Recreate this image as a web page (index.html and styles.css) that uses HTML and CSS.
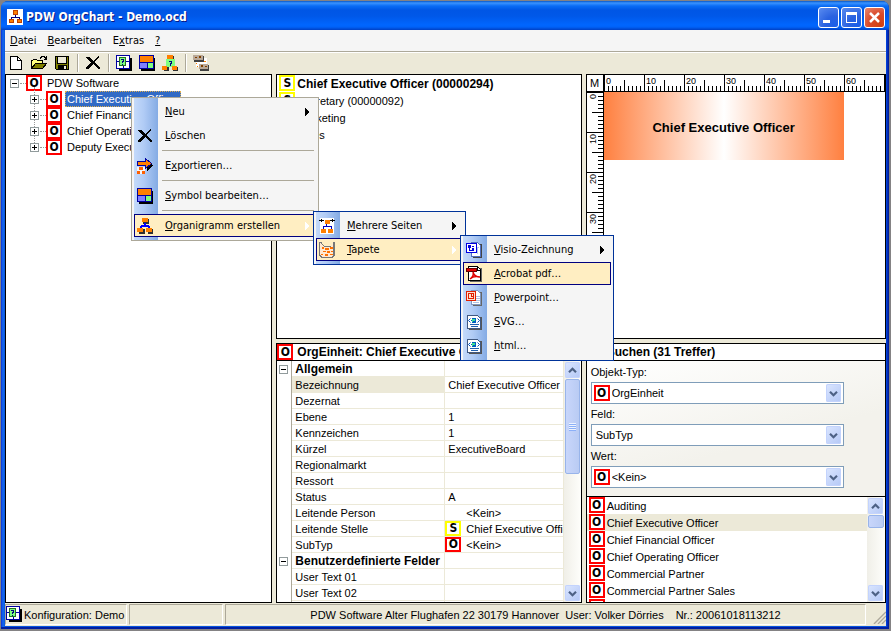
FILE: index.html
```html
<!DOCTYPE html>
<html lang="de">
<head>
<meta charset="utf-8">
<title>PDW OrgChart - Demo.ocd</title>
<link rel="stylesheet" href="styles.css">
</head>
<body>
<svg class="sprite" aria-hidden="true">
  <defs>
    <pattern id="ticks-x" width="40" height="17" patternUnits="userSpaceOnUse">
      <path d="M.5 0v17M20.500 5v12M4.500 11v6M8.500 11v6M12.500 11v6M16.500 11v6M24.500 11v6M28.500 11v6M32.500 11v6M36.500 11v6" stroke="#000"/>
    </pattern>
    <pattern id="ticks-y" width="17" height="40" patternUnits="userSpaceOnUse">
      <path d="M0 .5h17M5 20.500h12M11 4.500h6M11 8.500h6M11 12.500h6M11 16.500h6M11 24.500h6M11 28.500h6M11 32.500h6M11 36.500h6" stroke="#000"/>
    </pattern>
  </defs>
  <symbol id="app" viewBox="0 0 16 16"><path fill="#fff" d="M0 0h16v16H0z"/><path stroke="#000080" fill="none" d="M8.500 4v4M4.500 11V8.500h8V11"/><path fill="#ff8000" stroke="#c04000" d="M6.500 1.500h4v4h-4zM2.500 10.500h4v3h-4zM10.500 10.500h4v3h-4z"/></symbol>
  <symbol id="new" viewBox="0 0 16 16"><path fill="#fff" stroke="#000" d="M2.500 1.500h7l4 4v9h-11z"/><path fill="none" stroke="#000" d="M9.500 1.500v4h4"/></symbol>
  <symbol id="open" viewBox="0 0 16 16"><path fill="#ffff80" stroke="#000" d="M.5 14V5.500h1l1-1h3l1 1h5v3"/><path fill="#808000" stroke="#000" d="M.5 13.500l4-5h11l-4 5z"/><path fill="none" stroke="#000" d="M9 3.500l2-2h2l2 2M15.500 1v3h-3"/></symbol>
  <symbol id="save" viewBox="0 0 16 16"><path fill="#808000" stroke="#000" d="M1.500 1.500h13v13h-12l-1-1z"/><path fill="#ece9d8" d="M4 2h8v6H4z"/><path d="M4 10h9v4H4zM12 3h1v1h-1z"/><path fill="#ece9d8" d="M10 11h2v3h-2z"/><path stroke="#000" d="M3.500 2v6.500h9V2" fill="none"/></symbol>
  <symbol id="delete" viewBox="0 0 16 16"><path d="M1 2h3l4 4 5-5h1v1L10 7l5 6v1h-2L8 9l-4 5H1v-1l5-6-5-4z"/></symbol>
  <symbol id="config" viewBox="0 0 16 16"><path d="M3 3h13v13H3z"/><path fill="#fff" stroke="#0000a0" d="M.5 .5h13v13H.5zM.5 6.500h13M7.500 10v4"/><path fill="#80ff80" stroke="#207020" d="M3.500 2.500h6v8h-6z"/><path fill="#000080" d="M5 4h3v3H7v1H6V6h1V5H5zM6 9h1v1H6z"/></symbol>
  <symbol id="symbol" viewBox="0 0 16 16"><path d="M2 3h14v13H2z"/><path fill="#ff8000" stroke="#0000a0" d="M.5 .5h14v7H.5z"/><path fill="#8080ff" stroke="#0000a0" d="M.5 7.500h8v6h-8z"/><path fill="#80ff80" stroke="#0000a0" d="M8.500 7.500h6v6h-6z"/></symbol>
  <symbol id="query" viewBox="0 0 16 16"><path fill="#303030" d="M7 1h5v4H7zM2 12h5v4H2zM11 12h5v4h-5z"/><path fill="#80ff80" d="M4 4h9v8H4z"/><path fill="#000080" d="M7 6h3v3H9v1H8V8h1V7H7zM8 10h1v1H8z"/><path fill="#ff8000" d="M5 0h6v4H5zM0 11h5v4H0zM10 11h5v4h-5z"/></symbol>
  <symbol id="connect" viewBox="0 0 16 16"><path fill="#fff" d="M3 3h11v9H3z"/><path fill="#404040" d="M1 1h10v6H1zM7 10h9v6H7z"/><path fill="#b8a898" d="M0 0h10v5H0zM6 9h9v5H6z"/><path fill="#804000" d="M2 2h2v1H2zM6 1h2v2H6zM8 10h2v2H8zM12 11h2v1h-2z"/><path fill="#ff8000" d="M3 8h1v1H3zM11 6h2v1h-2zM4 11h1v1H4z"/></symbol>
  <symbol id="export" viewBox="0 0 16 16"><path fill="#000" d="M11 4l5 3-6 6v-4H4V9h6z"/><path fill="#ff8000" stroke="#0000a0" d="M.5 3.500h8v-3l6 5-6 5v-3h-8z"/><path fill="#f5f5f5" d="M0 9h8v7H0z"/><path fill="#ff6000" d="M2 9h4v3H2zM0 13h3v3H0zM5 13h3v3H5z"/></symbol>
  <symbol id="org" viewBox="0 0 16 16"><path fill="#303030" d="M6 1h6v5H6zM2 11h6v5H2zM11 11h5v5h-5z"/><path fill="none" stroke="#0000ff" stroke-width="2" d="M8 5v3M3 11l2-3h6l2 3"/><path fill="#ff8000" d="M5 0h6v4H5zM0 10h6v4H0zM9 10h6v4H9z"/></symbol>
  <symbol id="pages" viewBox="0 0 16 16"><path fill="#fff" d="M1 0h14v16H1z"/><path stroke="#000" fill="none" d="M0 2.500h5M11 2.500h5M2.500 1v3M13.500 1v3"/><path fill="none" stroke="#0000c0" d="M7.500 6v3M4.500 12V8.500h8V12"/><path fill="#ff8000" d="M6 2h5v4H6zM2 11h5v4H2zM9 11h5v4H9z"/></symbol>
  <symbol id="wall" viewBox="0 0 16 16"><path fill="#777" d="M0 0h3v2l2 2h7l2-2V0h2v14l-3 2H3l-3-2z"/><path fill="#ffe8d0" d="M1 1l4 4h7l2-4v12l-2 2H4l-3-2V3z"/><path fill="#ff7000" d="M3 5h2v2H3zM6 6h4v2H6zM11 5h3v2h-3zM4 9h3v1H4zM8 9h3v2H8zM12 9h2v1h-2zM2 12h2v1H2zM6 12h3v2H6zM11 12h3v1h-3z"/></symbol>
  <symbol id="visio" viewBox="0 0 16 16"><path fill="#444" d="M7 2h9v14H7z"/><path fill="#fff" stroke="#5070c0" d="M5.500 .5h6l3 3v11h-9z"/><path stroke="#b0c8f0" d="M10 5.500h3M11.500 6v6"/><path fill="#fff" stroke="#0000e0" d="M.5 1.500h10v9H.5z"/><path fill="#0000e0" d="M2 3h3v3H2zM6 6h2v3H6zM3 6h1v2h2v1H3zM6 4h2v1H6z"/></symbol>
  <symbol id="pdf" viewBox="0 0 16 16"><path fill="#666" d="M4 2h12v14H4z"/><path fill="#fff" stroke="#000" d="M2.500 .5h9l3 3v11h-12z"/><path fill="none" stroke="#000" d="M11.500 1v3h3"/><path fill="#e00000" stroke="#600" d="M.5 2.500h10v3H.5z"/><path shape-rendering="auto" fill="none" stroke="#e00000" stroke-width="1.500" d="M7 6c1 3 0 5-3 7M7 6c1 4 3 5 7 5M4 13c3-3 6-3 10-2"/></symbol>
  <symbol id="ppt" viewBox="0 0 16 16"><path fill="#666" d="M7 2h9v14H7z"/><path fill="#fff" stroke="#8098c0" d="M5.500 .5h6l3 3v11h-9z"/><path stroke="#b0c0e0" d="M10 6.500h4M10 8.500h4M10 10.500h4M7 12.500h6"/><path fill="#ffe0d0" stroke="#e02000" d="M.5 1.500h9v9H.5z"/><path fill="none" stroke="#e02000" d="M2.500 3.500h5v5h-5zM5.500 4v2.500H8"/></symbol>
  <symbol id="web" viewBox="0 0 16 16"><path fill="#555" d="M3 3h13v13H3z"/><path fill="#fff" stroke="#405880" d="M1.500 1.500h10l3 3v10h-13z"/><path shape-rendering="auto" fill="none" stroke="#0050c0" d="M4.500 4.500L2.500 6.500l2 2M11.500 4.500l2 2-2 2"/><circle cx="8" cy="6.500" r="2.500" fill="#0060c0"/><path fill="#40e090" d="M6 5h3v2H7v1H6z"/><path stroke="#2060b0" d="M4 10.500h9M5 12.500h7"/></symbol>
  <symbol id="arrow" viewBox="0 0 4 8"><path d="M0 0l4 4-4 4z"/></symbol>
  <symbol id="down" viewBox="0 0 10 8"><path shape-rendering="auto" fill="none" stroke="#4d6185" stroke-width="2.500" d="M1 2l4 4 4-4"/></symbol>
  <symbol id="up" viewBox="0 0 10 8"><path shape-rendering="auto" fill="none" stroke="#4d6185" stroke-width="2.500" d="M1 6l4-4 4 4"/></symbol>
</svg>

<div class="window">
  <header class="titlebar">
    <svg class="icon"><use href="#app"/></svg>
    <h1>PDW OrgChart - Demo.ocd</h1>
    <div class="caption-buttons">
      <button class="caption" aria-label="Minimieren"><svg viewBox="0 0 19 19"><path fill="#fff" d="M4 12h7v3H4z"/></svg></button>
      <button class="caption" aria-label="Maximieren"><svg viewBox="0 0 19 19"><path fill="#fff" d="M4 4h11v11H4zM5 7v7h9V7z" fill-rule="evenodd"/></svg></button>
      <button class="caption close" aria-label="Schließen"><svg viewBox="0 0 19 19"><path shape-rendering="auto" stroke="#fff" stroke-width="2.500" d="M5 5l9 9M14 5l-9 9"/></svg></button>
    </div>
  </header>

  <nav class="menubar">
    <button><u>D</u>atei</button>
    <button><u>B</u>earbeiten</button>
    <button>E<u>x</u>tras</button>
    <button><u>?</u></button>
  </nav>

  <div class="toolbar">
    <button aria-label="Neu"><svg class="icon"><use href="#new"/></svg></button>
    <button aria-label="Öffnen"><svg class="icon"><use href="#open"/></svg></button>
    <button aria-label="Speichern"><svg class="icon"><use href="#save"/></svg></button>
    <i></i>
    <button aria-label="Löschen"><svg class="icon"><use href="#delete"/></svg></button>
    <i></i>
    <button aria-label="Konfiguration"><svg class="icon"><use href="#config"/></svg></button>
    <button aria-label="Symbol"><svg class="icon"><use href="#symbol"/></svg></button>
    <button aria-label="Abfrage"><svg class="icon"><use href="#query"/></svg></button>
    <i></i>
    <button aria-label="Verbinden"><svg class="icon"><use href="#connect"/></svg></button>
  </div>

  <main class="workspace">
    <section class="panel tree">
      <div class="node root"><button class="expander" aria-label="Zuklappen"></button><b class="badge">O</b><span>PDW Software</span></div>
      <ul>
        <li class="node selected"><button class="expander plus" aria-label="Aufklappen"></button><b class="badge">O</b><span>Chief Executive Officer</span></li>
        <li class="node"><button class="expander plus" aria-label="Aufklappen"></button><b class="badge">O</b><span>Chief Financial Officer</span></li>
        <li class="node"><button class="expander plus" aria-label="Aufklappen"></button><b class="badge">O</b><span>Chief Operating Officer</span></li>
        <li class="node"><button class="expander plus" aria-label="Aufklappen"></button><b class="badge">O</b><span>Deputy Executive</span></li>
      </ul>
    </section>

    <section class="panel">
      <ul class="list">
        <li class="strong"><b class="badge stelle">S</b>Chief Executive Officer (00000294)</li>
        <li><b class="badge stelle">S</b>Secretary (00000092)</li>
        <li><b class="badge">O</b>Marketing</li>
        <li><b class="badge">O</b>Sales</li>
      </ul>
    </section>

    <section class="panel preview">
      <div class="corner">M</div>
      <svg class="ruler-x">
        <rect width="100%" height="17" fill="url(#ticks-x)"/>
        <g><text x="2" y="9">0</text><text x="42" y="9">10</text><text x="82" y="9">20</text><text x="122" y="9">30</text><text x="162" y="9">40</text><text x="202" y="9">50</text><text x="242" y="9">60</text></g>
      </svg>
      <svg class="ruler-y">
        <rect width="17" height="100%" fill="url(#ticks-y)"/>
        <g><text transform="translate(9 7) rotate(-90)">0</text><text transform="translate(9 52) rotate(-90)">10</text><text transform="translate(9 92) rotate(-90)">20</text><text transform="translate(9 132) rotate(-90)">30</text><text transform="translate(9 172) rotate(-90)">40</text></g>
      </svg>
      <div class="canvas"><div class="org-box">Chief Executive Officer</div></div>
    </section>

    <section class="panel properties">
      <h2><b class="badge">O</b>OrgEinheit: Chief Executive Officer</h2>
      <div class="scroll-area">
        <div class="grid-wrap">
        <table>
          <colgroup><col class="gutter"><col class="name"><col></colgroup>
          <tr class="group"><td><button class="expander" aria-label="Zuklappen"></button></td><th>Allgemein</th><td></td></tr>
          <tr class="current-row"><td></td><th>Bezeichnung</th><td>Chief Executive Officer</td></tr>
          <tr><td></td><th>Dezernat</th><td></td></tr>
          <tr><td></td><th>Ebene</th><td>1</td></tr>
          <tr><td></td><th>Kennzeichen</th><td>1</td></tr>
          <tr><td></td><th>Kürzel</th><td>ExecutiveBoard</td></tr>
          <tr><td></td><th>Regionalmarkt</th><td></td></tr>
          <tr><td></td><th>Ressort</th><td></td></tr>
          <tr><td></td><th>Status</th><td>A</td></tr>
          <tr><td></td><th>Leitende Person</th><td class="ref"><div><b class="badge empty"></b>&lt;Kein&gt;</div></td></tr>
          <tr><td></td><th>Leitende Stelle</th><td class="ref"><div><b class="badge stelle">S</b>Chief Executive Officer</div></td></tr>
          <tr><td></td><th>SubTyp</th><td class="ref"><div><b class="badge">O</b>&lt;Kein&gt;</div></td></tr>
          <tr class="group"><td><button class="expander" aria-label="Zuklappen"></button></td><th>Benutzerdefinierte Felder</th><td></td></tr>
          <tr><td></td><th>User Text 01</th><td></td></tr>
          <tr><td></td><th>User Text 02</th><td></td></tr>
          <tr><td></td><th></th><td></td></tr>
        </table>
        </div>
        <div class="scrollbar"><button aria-label="Nach oben"><svg><use href="#up"/></svg></button><div class="thumb long"><i></i></div><button class="end" aria-label="Nach unten"><svg><use href="#down"/></svg></button></div>
      </div>
    </section>

    <section class="panel search">
      <h2>Suchen (31 Treffer)</h2>
      <form>
        <label for="type">Objekt-Typ:</label>
        <div class="combo with-badge"><b class="badge">O</b><select id="type"><option>OrgEinheit</option></select><span><svg><use href="#down"/></svg></span></div>
        <label for="field">Feld:</label>
        <div class="combo"><select id="field"><option>SubTyp</option></select><span><svg><use href="#down"/></svg></span></div>
        <label for="value">Wert:</label>
        <div class="combo with-badge"><b class="badge">O</b><select id="value"><option>&lt;Kein&gt;</option></select><span><svg><use href="#down"/></svg></span></div>
      </form>
      <div class="scroll-area results">
        <ul class="list">
          <li><b class="badge">O</b>Auditing</li>
          <li class="current"><b class="badge">O</b>Chief Executive Officer</li>
          <li><b class="badge">O</b>Chief Financial Officer</li>
          <li><b class="badge">O</b>Chief Operating Officer</li>
          <li><b class="badge">O</b>Commercial Partner</li>
          <li><b class="badge">O</b>Commercial Partner Sales</li>
          <li><b class="badge"></b></li>
        </ul>
        <div class="scrollbar"><button aria-label="Nach oben"><svg><use href="#up"/></svg></button><div class="thumb"></div><button class="end" aria-label="Nach unten"><svg><use href="#down"/></svg></button></div>
      </div>
    </section>
  </main>

  <footer class="statusbar">
    <div class="config"><svg class="icon"><use href="#config"/></svg>Konfiguration: Demo</div>
    <div class="blank"></div>
    <div class="info"><span>PDW Software Alter Flughafen 22 30179 Hannover</span><span>User: Volker Dörries</span><span class="number">Nr.: 20061018113212</span></div>
    <svg class="grip" viewBox="0 0 14 14"><g shape-rendering="auto" fill="none"><path stroke="#fff" d="M3 14L14 3M7 14l7-7M11 14l3-3"/><path stroke="#aca899" stroke-width="1.500" d="M2 14L14 2M6 14l8-8M10 14l4-4"/></g></svg>
  </footer>

  <ul class="menu context">
    <li><button><span class="slot"></span><span><u>N</u>eu</span><svg class="arrow"><use href="#arrow"/></svg></button></li>
    <li><button><span class="slot"><svg class="icon"><use href="#delete"/></svg></span><span><u>L</u>öschen</span></button></li>
    <li class="separator"></li>
    <li><button><span class="slot"><svg class="icon"><use href="#export"/></svg></span><span>E<u>x</u>portieren…</span></button></li>
    <li class="separator"></li>
    <li><button><span class="slot"><svg class="icon"><use href="#symbol"/></svg></span><span><u>S</u>ymbol bearbeiten…</span></button></li>
    <li class="separator"></li>
    <li class="active"><button><span class="slot"><svg class="icon"><use href="#org"/></svg></span><span><u>O</u>rganigramm erstellen</span><svg class="arrow"><use href="#arrow"/></svg></button>
      <ul class="menu sub pages">
        <li><button><span class="slot"><svg class="icon"><use href="#pages"/></svg></span><span><u>M</u>ehrere Seiten</span><svg class="arrow"><use href="#arrow"/></svg></button></li>
        <li class="active"><button><span class="slot"><svg class="icon"><use href="#wall"/></svg></span><span><u>T</u>apete</span><svg class="arrow"><use href="#arrow"/></svg></button>
          <ul class="menu sub formats">
            <li><button><span class="slot"><svg class="icon"><use href="#visio"/></svg></span><span><u>V</u>isio-Zeichnung</span><svg class="arrow"><use href="#arrow"/></svg></button></li>
            <li class="active"><button><span class="slot"><svg class="icon"><use href="#pdf"/></svg></span><span><u>A</u>crobat pdf…</span></button></li>
            <li><button><span class="slot"><svg class="icon"><use href="#ppt"/></svg></span><span><u>P</u>owerpoint…</span></button></li>
            <li><button><span class="slot"><svg class="icon"><use href="#web"/></svg></span><span><u>S</u>VG…</span></button></li>
            <li><button><span class="slot"><svg class="icon"><use href="#web"/></svg></span><span><u>h</u>tml…</span></button></li>
          </ul>
        </li>
      </ul>
    </li>
  </ul>
</div>
</body>
</html>
```
FILE: styles.css
```css
* { box-sizing: border-box; }
body {
  margin: 0;
  padding: 1px 2px 2px 1px;
  height: 100vh;
  overflow: hidden;
  background: #848284;
  color: #000;
  font: 11px/16px "Liberation Sans", Arial, sans-serif;
}
button { font: inherit; color: inherit; border: 0; padding: 0; background: none; }
ul { list-style: none; margin: 0; padding: 0; }
h1, h2 { margin: 0; }
svg { shape-rendering: crispEdges; }
.sprite { position: absolute; width: 0; height: 0; }
.icon { display: block; width: 16px; height: 16px; flex: none; }

.window {
  position: relative;
  height: 100%;
  display: flex;
  flex-direction: column;
  padding: 0 3px 3px 4px;
  border-radius: 7px 7px 0 0;
  background: linear-gradient(90deg, #0831d9, #166aee 2px, #0855dd 4px, #0855dd calc(100% - 4px), #0048e8 calc(100% - 3px), #00138c);
  box-shadow: inset 0 -2px #001ea0;
}

.titlebar {
  flex: none;
  display: flex;
  align-items: center;
  height: 29px;
  margin: 0 -3px 0 -4px;
  padding: 3px 4px 0 6px;
  border-radius: 7px 7px 0 0;
  background: linear-gradient(#0958c8, #3a93ff 2px, #0a6cf5 5px, #0056e5 9px, #0058e8 15px, #0066ff 24px, #0062f8 26px, #0040c4);
}
.titlebar h1 {
  margin-left: 3px;
  color: #fff;
  font: bold 12px/16px "DejaVu Sans Condensed", sans-serif;
  text-shadow: 1px 1px #0a1883;
}
.caption-buttons { display: flex; gap: 2px; margin-left: auto; }
.caption {
  width: 21px;
  height: 21px;
  border: 1px solid #fff;
  border-radius: 3px;
  background: radial-gradient(circle at 80% 90%, #1c5fe8, #2a62e0 40%, #5a8cf0);
}
.caption svg { display: block; width: 19px; height: 19px; }
.caption.close { background: radial-gradient(circle at 80% 90%, #d04010, #da4a2a 50%, #e88870); }

.menubar {
  flex: none;
  display: flex;
  gap: 11px;
  height: 22px;
  padding: 1px 5px 0;
  background: #f5f5f5;
  border-bottom: 1px solid #aca899;
  font: 11px/16px "DejaVu Sans Condensed", sans-serif;
}
.toolbar {
  flex: none;
  display: flex;
  height: 22px;
  background: #ece9d8;
  border-top: 1px solid #fff;
}
.toolbar button { width: 23px; height: 20px; padding: 2px 3px; }
.toolbar i { width: 2px; height: 18px; margin: 1px 3px; border-left: 1px solid #aca899; border-right: 1px solid #fff; }

.workspace {
  flex: 1;
  min-height: 0;
  display: grid;
  grid-template-columns: 267fr 305fr 300fr;
  grid-template-rows: 265fr 260fr;
  gap: 4px;
  background: #ece9d8;
}
.panel { min-width: 0; min-height: 0; overflow: hidden; background: #fff; border: 1px solid #000; }
.panel h2 {
  flex: none;
  display: flex;
  align-items: center;
  gap: 4px;
  height: 17px;
  border-bottom: 1px solid #000;
  background: #fff;
  font-size: 12px;
  white-space: nowrap;
}

.badge {
  flex: none;
  display: grid;
  place-items: center;
  width: 16px;
  height: 16px;
  border: 2px solid #f00;
  background: #fff;
  font: bold 12px/12px "DejaVu Sans Condensed", sans-serif;
}
.badge.stelle { border-color: #ff0; }
.badge.empty { border-color: transparent; }

.tree { grid-row: 1 / 3; }
.node { position: relative; display: flex; align-items: center; height: 16px; white-space: nowrap; }
.node.root { padding-left: 4px; }
.tree li { padding-left: 24px; }
.node .badge { margin-left: 7px; }
.node span { margin-left: 3px; padding: 0 1px; line-height: 14px; border: 1px solid transparent; }
.node.selected span { background: #316ac5; color: #fff; border: 1px dotted #e0b050; }
.node::before { content: ""; position: absolute; left: 14px; top: 8px; width: 6px; border-top: 1px dotted #999; }
.tree li::before { left: 34px; }
.tree li::after { content: ""; position: absolute; left: 28px; top: -4px; height: 8px; border-left: 1px dotted #999; }
.expander {
  position: relative;
  flex: none;
  z-index: 1;
  width: 9px;
  height: 9px;
  border: 1px solid #919b9c;
  background: linear-gradient(#000, #000) center / 5px 1px no-repeat, #fff;
}
.expander.plus { background: linear-gradient(#000, #000) center / 5px 1px no-repeat, linear-gradient(#000, #000) center / 1px 5px no-repeat, #fff; }

.list { flex: 1; min-width: 0; }
.list li { display: flex; gap: 2px; height: 17px; padding-left: 2px; line-height: 18px; white-space: nowrap; }
.list .strong { font-size: 12px; font-weight: bold; }
.current { background: #ece9d8; }

.preview { display: grid; grid-template: 17px 1fr / 17px 1fr; }
.corner { font-size: 11px; text-align: center; border: solid #000; border-width: 0 1px 1px 0; }
.ruler-x { width: 100%; height: 17px; border-bottom: 1px solid #000; }
.ruler-y { width: 17px; height: 100%; border-right: 1px solid #000; }
.preview text { font-size: 9px; stroke: #fff; stroke-width: 2px; paint-order: stroke; }
.org-box {
  display: grid;
  place-items: center;
  width: 240px;
  height: 68px;
  padding-top: 4px;
  background: linear-gradient(90deg, #ff8040, #fff, #ff8040);
  font-size: 13px;
  font-weight: bold;
}

.properties, .search { display: flex; flex-direction: column; }
.scroll-area { flex: 1; min-height: 0; display: flex; overflow: hidden; }
.grid-wrap { flex: 1; min-width: 0; overflow: hidden; }
table { width: 100%; table-layout: fixed; border-collapse: separate; border-spacing: 0; }
.gutter { width: 15px; }
.name { width: 153px; }
tr { height: 16px; background: #fff; }
th, td { height: 16px; padding: 1px 3px 0; line-height: 14px; text-align: left; font-weight: normal; white-space: nowrap; overflow: hidden; border: solid #ece9d8; border-width: 0 1px 1px 0; }
tr td:first-child { padding: 0 2px; border: 0; border-right: 1px solid #aca899; line-height: 0; }
.group th { font-size: 12px; font-weight: bold; }
.current-row th { background: #ece9d8; }
td.ref { padding: 0; }
td.ref div { display: flex; gap: 5px; height: 15px; line-height: 17px; }
td.ref .badge { height: 15px; line-height: 11px; }

.scrollbar { flex: none; display: flex; flex-direction: column; gap: 1px; width: 17px; padding: 1px; background: linear-gradient(90deg, #f0efe8, #fefefb); }
.scrollbar button, .combo span { display: grid; place-items: center; width: 15px; height: 16px; border-radius: 2px; background: linear-gradient(135deg, #dbe6ff, #b4c8f6); box-shadow: inset 0 0 0 1px #c3d3fd; }
.scrollbar svg, .combo svg { width: 9px; height: 7px; }
.scrollbar .end { margin-top: auto; }
.thumb { display: grid; place-items: center; height: 13px; border: 1px solid #98b4ea; border-radius: 2px; background: linear-gradient(90deg, #c8d6fb, #b9cbf3); }
.thumb.long { height: 95px; }
.thumb i { width: 7px; height: 8px; background: repeating-linear-gradient(#eef4fe 0 1px, #8cb0f8 1px 2px); }

.search h2 { padding-left: 20px; }
.search form { flex: none; padding: 4px 4px 8px; background: linear-gradient(165deg, #fff, #f3f2ec 60%); border-bottom: 1px solid #000; }
.search label { display: block; height: 17px; line-height: 15px; }
.combo { position: relative; display: flex; align-items: center; max-width: 253px; height: 22px; margin-bottom: 3px; padding: 0 2px; border: 1px solid #7f9db9; background: #fff; }
.combo:last-child { margin-bottom: 0; }
.combo select { flex: 1; min-width: 0; height: 20px; padding: 0 2px; border: 0; appearance: none; background: none; color: #000; font: inherit; }
.combo span { height: 18px; pointer-events: none; }
.results .scrollbar { width: 18px; }

.statusbar { flex: none; display: flex; gap: 2px; height: 23px; padding: 1px 0; background: #ece9d8; line-height: 20px; white-space: nowrap; }
.statusbar div { border: solid; border-width: 1px; border-color: #aca899 #fff #fff #aca899; }
.statusbar .config { display: flex; gap: 2px; width: 122px; }
.statusbar .config .icon { margin-top: 1px; }
.statusbar .blank { width: 94px; }
.statusbar .info { flex: 1; display: flex; justify-content: center; gap: 6px; }
.statusbar .number { margin-left: 6px; }
.grip { width: 14px; height: 14px; margin: 6px 0 0 4px; }

.menu {
  position: absolute;
  z-index: 5;
  padding: 1px 2px 3px;
  border: 1px solid #003399;
  background: linear-gradient(90deg, #c4dafa, #b0cbf5 10px, #84abe4 24px, #f5f5f5 24px) 2px 0 no-repeat, #f5f5f5;
  font: 11px/16px "DejaVu Sans Condensed", sans-serif;
}
.menu li { position: relative; }
.menu button { display: flex; width: 100%; height: 24px; padding-top: 5px; padding-right: 7px; text-align: left; white-space: nowrap; }
.slot { flex: none; width: 22px; height: 16px; margin-right: 9px; padding-left: 3px; }
.menu .active > button { height: 23px; margin-top: 1px; padding-top: 3px; padding-right: 6px; border: 1px solid #000080; background: #ffeec2; }
.menu .active > button .slot { margin-left: -1px; }
.arrow { width: 4px; height: 8px; margin: 4px 0 0 auto; }
.active > button .arrow { fill: #fff; }
.separator { height: 6px; padding-top: 3px; }
.separator::after { content: ""; display: block; margin: 0 2px 0 28px; height: 1px; background: #aca899; }
.context { left: 130px; top: 96px; width: 188px; border-color: #aca899; }
.sub.pages { left: 179px; top: -3px; width: 153px; }
.sub.formats { left: 144px; top: -3px; width: 154px; }
```
